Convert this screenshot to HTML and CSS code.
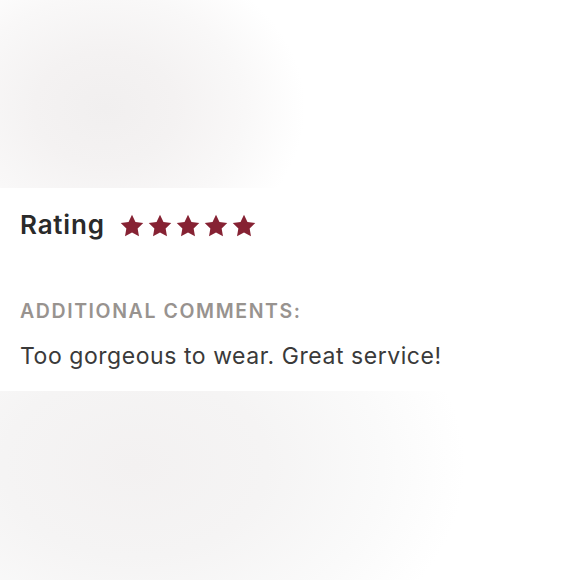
FILE: index.html
```html
<!DOCTYPE html>
<html lang="en">

<head>
    <meta charset="UTF-8">
    <meta name="viewport" content="width=device-width, initial-scale=1.0">
    <title>Review</title>
    <link rel="stylesheet" href="styles.css">
</head>

<body>
    <div class="photo photo-top"></div>

    <div class="review">
        <div class="rating-row">
            <span class="rating-label">Rating</span>
            <div class="stars">
                <svg viewBox="0 0 24 24"><path d="M12 1.6l3.2 6.6 7.2 1-5.2 5.1 1.25 7.2L12 18.1l-6.45 3.4 1.25-7.2L1.6 9.2l7.2-1z"/></svg>
                <svg viewBox="0 0 24 24"><path d="M12 1.6l3.2 6.6 7.2 1-5.2 5.1 1.25 7.2L12 18.1l-6.45 3.4 1.25-7.2L1.6 9.2l7.2-1z"/></svg>
                <svg viewBox="0 0 24 24"><path d="M12 1.6l3.2 6.6 7.2 1-5.2 5.1 1.25 7.2L12 18.1l-6.45 3.4 1.25-7.2L1.6 9.2l7.2-1z"/></svg>
                <svg viewBox="0 0 24 24"><path d="M12 1.6l3.2 6.6 7.2 1-5.2 5.1 1.25 7.2L12 18.1l-6.45 3.4 1.25-7.2L1.6 9.2l7.2-1z"/></svg>
                <svg viewBox="0 0 24 24"><path d="M12 1.6l3.2 6.6 7.2 1-5.2 5.1 1.25 7.2L12 18.1l-6.45 3.4 1.25-7.2L1.6 9.2l7.2-1z"/></svg>
            </div>
        </div>

        <h2 class="comments-title">Additional comments:</h2>
        <p class="comment">Too gorgeous to wear. Great service!</p>
    </div>

    <div class="photo photo-bottom"></div>
</body>

</html>
```

FILE: styles.css
```css
body {
    margin: 0;
    padding: 0;
    background: #fff;
    font-family: Inter, Lato, Arial, sans-serif;
    overflow: hidden;
}

/* blurred product photos above and below the review */
.photo {
    width: 100%;
}

.photo-top {
    height: 188px;
    background: radial-gradient(ellipse 200px 160px at 105px 108px, #f1efef 0%, #f4f2f2 35%, #f9f8f8 70%, #fff 100%);
}

.photo-bottom {
    height: 189px;
    background: radial-gradient(ellipse 330px 230px at 135px 74px, #f3f1f1 0%, #f5f4f4 40%, #fafafa 75%, #fff 100%);
}

.review {
    height: 203px;
    padding: 0 20px;
    box-sizing: border-box;
}

.rating-row {
    display: flex;
    align-items: center;
    gap: 14px;
    padding-top: 21px;
    height: 32px;
}

.rating-label {
    font-size: 26px;
    font-weight: 600;
    letter-spacing: 0.8px;
    color: #2a2a2a;
    line-height: 32px;
}

.stars {
    display: flex;
    gap: 2px;
    padding-top: 1px;
}

.stars svg {
    width: 26px;
    height: 26px;
    fill: #862233;
}

.comments-title {
    margin: 57px 0 0;
    font-size: 19.5px;
    font-weight: 600;
    letter-spacing: 1.6px;
    text-transform: uppercase;
    color: #98938f;
    line-height: 26px;
}

.comment {
    margin: 17px 0 0;
    font-size: 23px;
    letter-spacing: 0.55px;
    color: #3a3a3a;
    line-height: 30px;
}
```
